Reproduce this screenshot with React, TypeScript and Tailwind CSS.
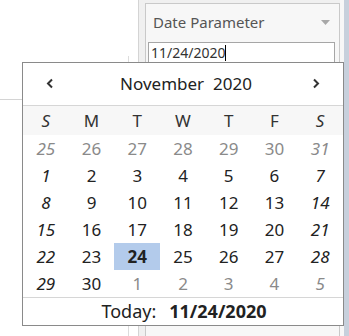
import React from "react";

const font = { fontFamily: '"Noto Sans", "Open Sans", sans-serif' };

type Cell = { d: number; out: boolean };

const rows: Cell[][] = [
  [25, 26, 27, 28, 29, 30, 31].map((d) => ({ d, out: true })),
  [1, 2, 3, 4, 5, 6, 7].map((d) => ({ d, out: false })),
  [8, 9, 10, 11, 12, 13, 14].map((d) => ({ d, out: false })),
  [15, 16, 17, 18, 19, 20, 21].map((d) => ({ d, out: false })),
  [22, 23, 24, 25, 26, 27, 28].map((d) => ({ d, out: false })),
  [
    { d: 29, out: false },
    { d: 30, out: false },
    { d: 1, out: true },
    { d: 2, out: true },
    { d: 3, out: true },
    { d: 4, out: true },
    { d: 5, out: true },
  ],
];

const days = ["S", "M", "T", "W", "T", "F", "S"];

export default function App() {
  return (
    <div
      className="relative flex w-[349px] h-[336px] overflow-hidden bg-[#f0f0f0]"
      style={font}
    >
      {/* left panel */}
      <div className="relative w-[139px] h-full bg-white border-r border-[#d4d4d4] shrink-0">
        <div className="h-[100px] border-b border-[#d4d4d4]" />
        <div className="absolute left-[128px] top-[56px] bottom-0 border-l border-[#dcdcdc]" />
      </div>
      {/* gap */}
      <div className="w-[6px] shrink-0" />
      {/* right panel */}
      <div className="mt-[3px] w-[195px] h-[340px] shrink-0 border border-[#c9c9c9] bg-[#f7f7f7]">
        <div className="flex items-center justify-between h-[36px] pl-[7px] pr-[9px]">
          <span className="text-[15px] text-[#555555]">Date Parameter</span>
          <svg width="9" height="5" viewBox="0 0 9 5">
            <path d="M0 0 L9 0 L4.5 5 Z" fill="#a8a8a8" />
          </svg>
        </div>
        <div className="ml-[2px] mt-[2px] w-[187px] h-[30px] border border-[#a6a6a6] bg-white pl-[2px] flex items-start">
          <span className="text-[14px] leading-[20px] text-[#333333]">11/24/2020</span>
          <span className="mt-[2px] w-px h-[16px] bg-black" />
        </div>
      </div>
      <div className="w-[4px] shrink-0 bg-[#f7f7f7]" />
      <div className="flex-1 bg-[#c7d0dc]" />

      {/* popup calendar */}
      <div className="absolute left-[22px] top-[62px] w-[322px] h-[264px] bg-white border border-[#8a8a8a] flex flex-col">
        <div className="h-[44px] flex items-center justify-between px-[23px] border-b border-[#d6d6d6]">
          <svg width="8" height="11" viewBox="0 0 8 11">
            <path d="M6 1.5 L2 5.5 L6 9.5" stroke="#333" strokeWidth="2" fill="none" />
          </svg>
          <span className="text-[17px] text-[#222222] whitespace-pre ml-[6px]">November  2020</span>
          <svg width="8" height="11" viewBox="0 0 8 11">
            <path d="M2 1.5 L6 5.5 L2 9.5" stroke="#333" strokeWidth="2" fill="none" />
          </svg>
        </div>
        <div className="h-[30px] grid grid-cols-7 bg-[#f7f7f7] items-center">
          {days.map((d, i) => (
            <div
              key={i}
              className={`text-center text-[17px] text-[#333333] ${i === 0 || i === 6 ? "italic" : ""}`}
            >
              {d}
            </div>
          ))}
        </div>
        <div className="flex flex-col">
          {rows.map((r, ri) => (
            <div key={ri} className="grid grid-cols-7 h-[27px]">
              {r.map((c, ci) => {
                const weekend = ci === 0 || ci === 6;
                const sel = ri === 4 && ci === 2;
                return (
                  <div
                    key={ci}
                    className={`flex items-center justify-center text-[17px] ${
                      c.out ? "text-[#8a8a8a]" : "text-[#222222]"
                    } ${weekend ? "italic" : ""} ${
                      sel ? "bg-[#b3cbeb] font-bold text-[#111111]" : ""
                    }`}
                  >
                    {c.d}
                  </div>
                );
              })}
            </div>
          ))}
        </div>
        <div className="flex-1 border-t border-[#d6d6d6] flex items-center justify-center text-[18px] text-[#222222] pl-[2px]">
          <span>Today:</span>
          <span className="ml-[13px] font-bold">11/24/2020</span>
        </div>
      </div>
    </div>
  );
}
